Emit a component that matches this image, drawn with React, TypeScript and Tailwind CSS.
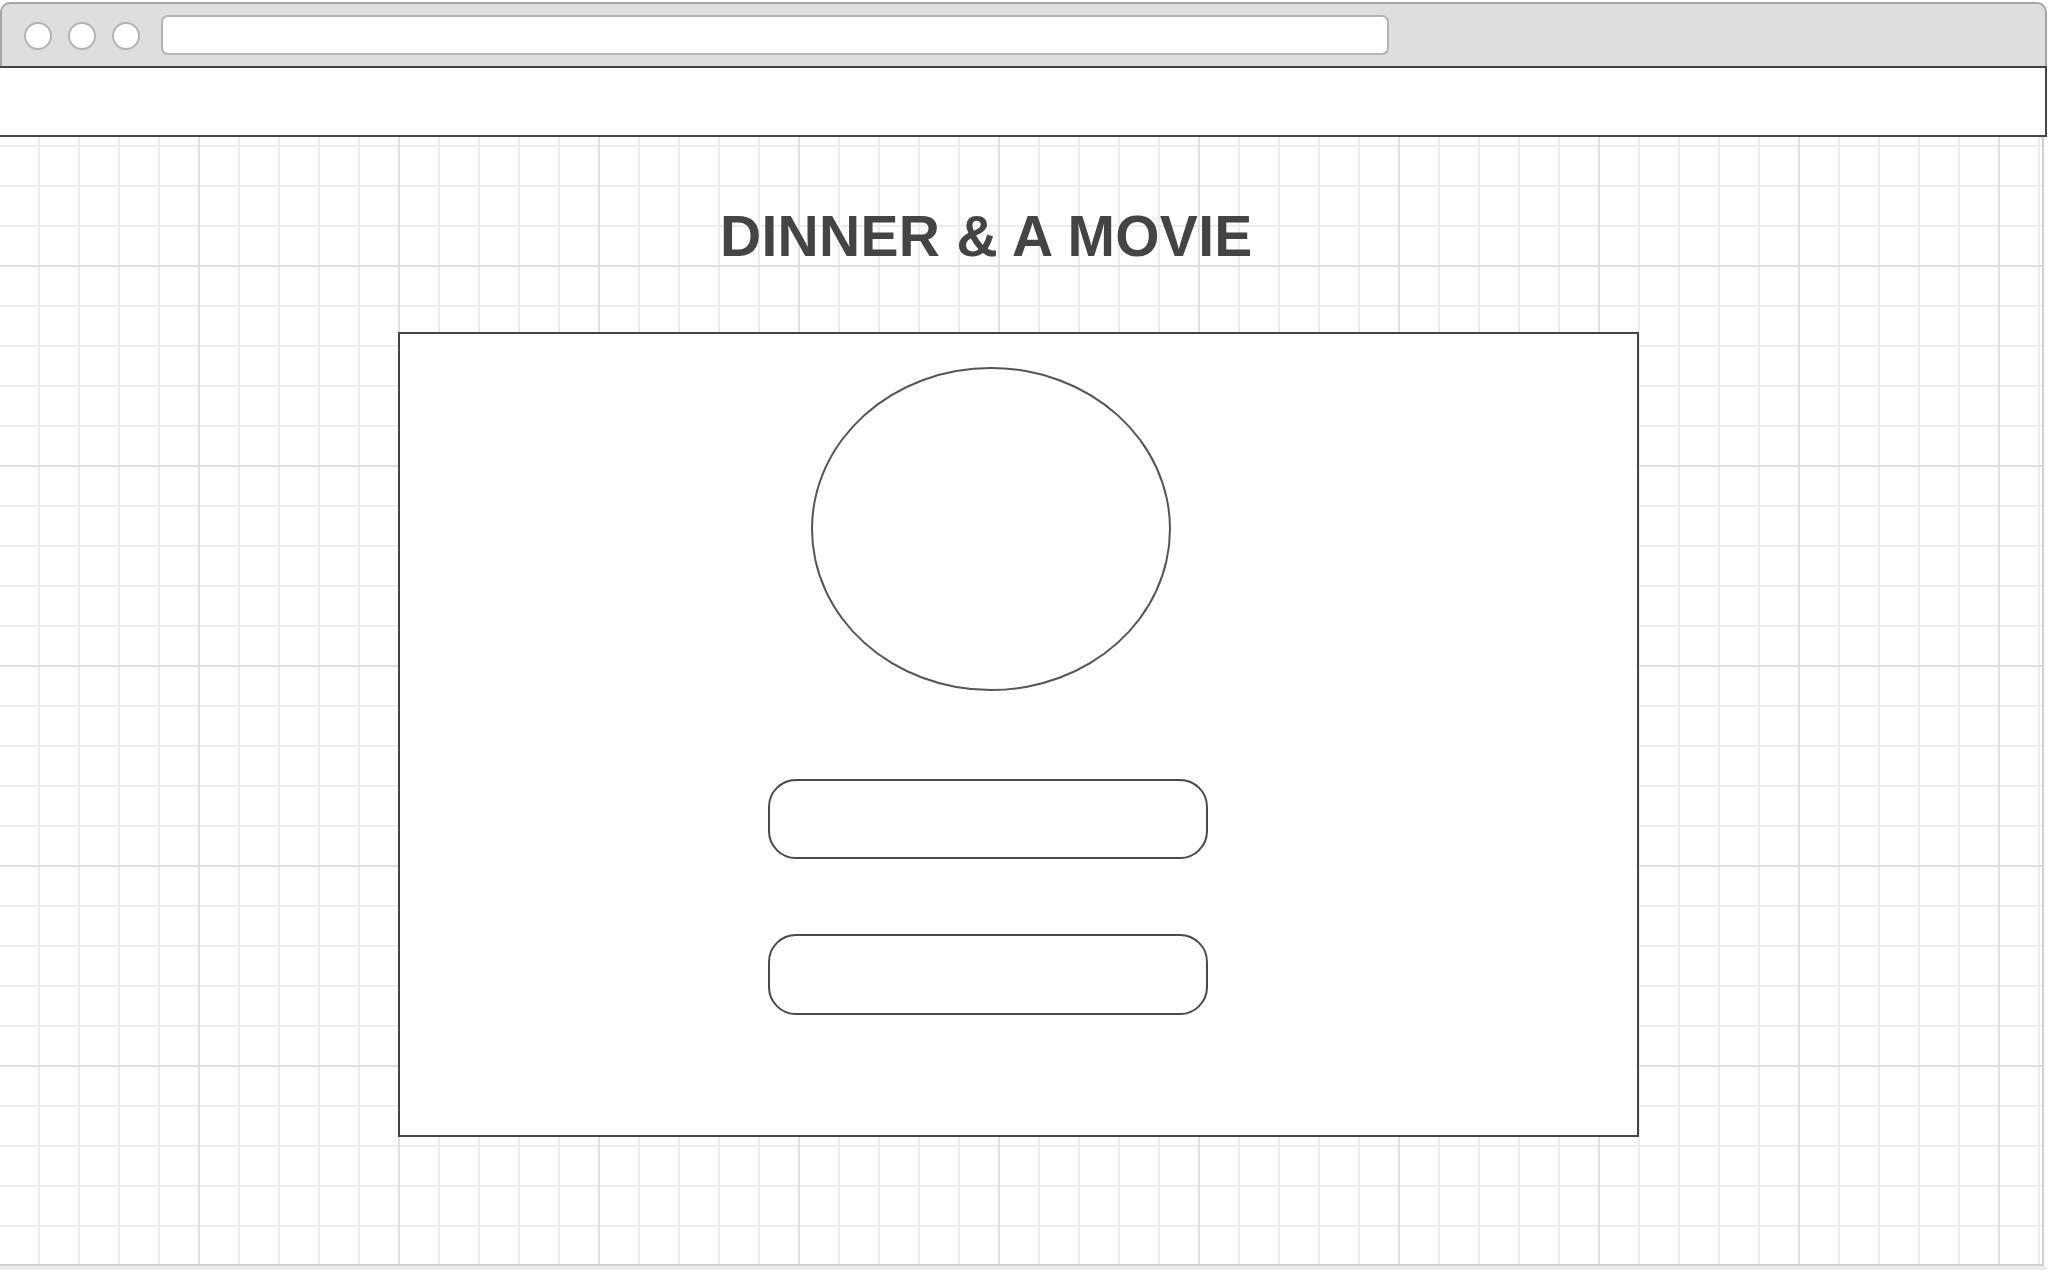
import React from "react";

export default function App() {
  return (
    <div className="w-[2048px] h-[1270px] overflow-hidden bg-white font-['Liberation_Sans',Arial,sans-serif]">
      <div className="w-[2047px] pt-[2px] flex flex-col">
        {/* browser chrome */}
        <div className="h-[64px] bg-[#dedede] border-t-2 border-r-2 border-l-2 border-[#a6a6a6] rounded-t-[10px] flex items-center pl-[22px]">
          <div className="flex items-center gap-[16px] mt-[2px]">
            <div className="w-[28px] h-[28px] rounded-full bg-white border-2 border-[#b4b4b4]" />
            <div className="w-[28px] h-[28px] rounded-full bg-white border-2 border-[#b4b4b4]" />
            <div className="w-[28px] h-[28px] rounded-full bg-white border-2 border-[#b4b4b4]" />
          </div>
          <div className="ml-[21px] w-[1228px] h-[40px] bg-white rounded-[7px] border-2 border-[#b4b4b4]" />
        </div>
        {/* nav bar */}
        <div className="h-[71px] bg-white border-t-2 border-b-2 border-r-2 border-[#444444]" />
        {/* canvas */}
        <div className="mr-[3px] h-[1129px] border-b-2 border-r-2 border-[#d0d0d0] bg-white [background-image:linear-gradient(to_right,#e0e0e0_2px,transparent_2px),linear-gradient(to_bottom,#e0e0e0_2px,transparent_2px),linear-gradient(to_right,#ececec_2px,transparent_2px),linear-gradient(to_bottom,#ececec_2px,transparent_2px)] [background-size:200px_200px,200px_200px,40px_40px,40px_40px] [background-position:198px_128px,198px_128px,38px_8px,38px_8px] flex flex-col">
          <h1 className="mt-[71px] ml-[720px] h-[57px] text-[57px] leading-[57px] font-bold tracking-[0.3px] text-[#444444] whitespace-nowrap">
            DINNER &amp; A MOVIE
          </h1>
          <div className="mt-[67px] ml-[398px] w-[1241px] h-[805px] border-2 border-[#444444] bg-white flex flex-col">
            <div className="mt-[33px] ml-[411px] w-[360px] h-[324px] rounded-[50%] border-2 border-[#555555]" />
            <div className="mt-[88px] ml-[368px] w-[440px] h-[80px] rounded-[28px] border-2 border-[#4a4a4a]" />
            <div className="mt-[75px] ml-[368px] w-[440px] h-[81px] rounded-[28px] border-2 border-[#4a4a4a]" />
          </div>
        </div>
        <div className="h-[4px] bg-[#ebebeb]" />
      </div>
    </div>
  );
}
